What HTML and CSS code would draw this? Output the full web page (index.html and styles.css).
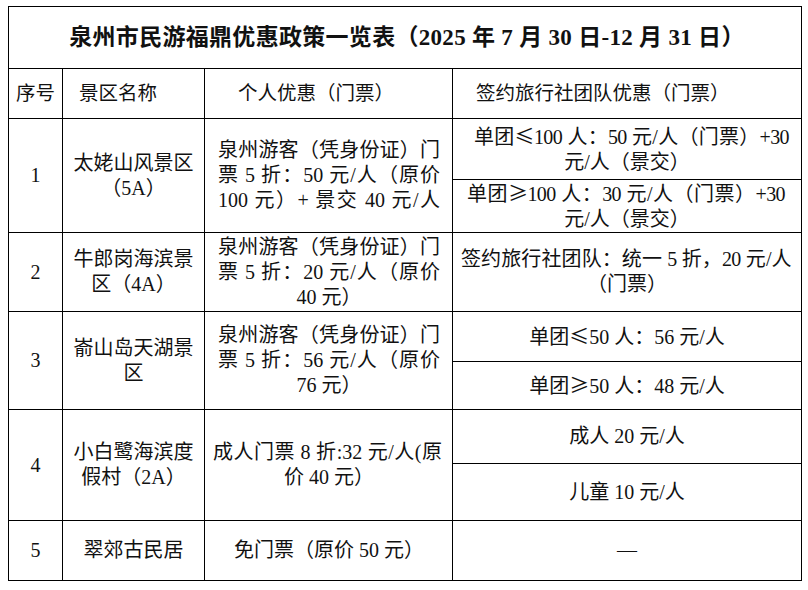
FILE: index.html
```html
<!DOCTYPE html>
<html lang="zh-CN">
<head>
<meta charset="utf-8">
<title>泉州市民游福鼎优惠政策一览表</title>
<link rel="stylesheet" href="styles.css">
</head>
<body>
<div class="sheet">
  <div class="cell title">泉州市民游福鼎优惠政策一览表（2025 年 7 月 30 日-12 月 31 日）</div>

  <div class="cell head h1">序号</div>
  <div class="cell head h2">景区名称</div>
  <div class="cell head h3">个人优惠（门票）</div>
  <div class="cell head h4">签约旅行社团队优惠（门票）</div>

  <div class="cell num span2">1</div>
  <div class="cell name span2"><div>太姥山风景区</div><div>（5A）</div></div>
  <div class="cell pers span2">
    <div class="jl">泉州游客（凭身份证）门</div>
    <div class="jl">票 5 折：50 元/人（原价</div>
    <div class="jl">100 元）+ 景交 40 元/人</div>
  </div>
  <div class="cell grp">
    <div class="jl tight g1">单团<span class="sym">≤</span>100 人：50 元/人（门票）+30</div>
    <div>元/人（景交）</div>
  </div>
  <div class="cell grp">
    <div class="jl tight g2">单团<span class="sym">≥</span>100 人：30 元/人（门票）+30</div>
    <div>元/人（景交）</div>
  </div>

  <div class="cell num">2</div>
  <div class="cell name"><div>牛郎岗海滨景</div><div>区（4A）</div></div>
  <div class="cell pers">
    <div class="jl">泉州游客（凭身份证）门</div>
    <div class="jl">票 5 折：20 元/人（原价</div>
    <div>40 元）</div>
  </div>
  <div class="cell grp">
    <div class="jl tight g3">签约旅行社团队：统一 5 折，20 元/人</div>
    <div>（门票）</div>
  </div>

  <div class="cell num span2">3</div>
  <div class="cell name span2"><div>嵛山岛天湖景</div><div>区</div></div>
  <div class="cell pers span2">
    <div class="jl">泉州游客（凭身份证）门</div>
    <div class="jl">票 5 折：56 元/人（原价</div>
    <div>76 元）</div>
  </div>
  <div class="cell grp"><div>单团<span class="sym">≤</span>50 人：56 元/人</div></div>
  <div class="cell grp"><div>单团<span class="sym">≥</span>50 人：48 元/人</div></div>

  <div class="cell num span2">4</div>
  <div class="cell name span2"><div>小白鹭海滨度</div><div>假村（2A）</div></div>
  <div class="cell pers span2">
    <div class="jl wide">成人门票 8 折:32 元/人(原</div>
    <div>价 40 元）</div>
  </div>
  <div class="cell grp"><div>成人 20 元/人</div></div>
  <div class="cell grp"><div>儿童 10 元/人</div></div>

  <div class="cell num">5</div>
  <div class="cell name"><div>翠郊古民居</div></div>
  <div class="cell pers"><div>免门票（原价 50 元）</div></div>
  <div class="cell grp"><div>—</div></div>
</div>
</body>
</html>
```
FILE: styles.css
```css
html, body {
  background: #ffffff;
}
body {
  margin: 6px 0 0 8px;
  font-family: "Liberation Serif", "Noto Sans CJK SC", serif;
  font-size: 20px;
  color: #111111;
}
.sheet {
  display: grid;
  grid-template-columns: 53px 141px 247px 348px;
  grid-template-rows: 61px 49px 60px 52px 78px 49px 47px 53px 56px 59px;
  gap: 1px;
  padding: 1px;
  background: #000000;
  width: max-content;
}
.cell {
  background: #ffffff;
  display: flex;
  flex-direction: column;
  justify-content: center;
  text-align: center;
  line-height: 25px;
  min-width: 0;
}
.span2 {
  grid-row: span 2;
}
.title {
  grid-column: 1 / -1;
  font-size: 23px;
  font-weight: bold;
  letter-spacing: 0.3px;
  padding-left: 4px;
}
.head {
  font-size: 19.5px;
  text-align: left;
}
.h1 {
  text-align: center;
}
.h2 {
  padding-left: 16px;
}
.h3 {
  padding-left: 33px;
}
.h4 {
  padding-left: 23px;
}
.pers {
  padding: 0 12px 0 13px;
}
.jl {
  text-align: justify;
  text-align-last: justify;
}
.tight {
  letter-spacing: -0.6px;
}
.wide {
  margin: 0 -2px 0 -5px;
}
.grp {
  align-items: stretch;
}
.g1 {
  margin-left: 21px;
  width: 315px;
}
.g2 {
  margin-left: 14px;
  width: 318px;
}
.g3 {
  margin-left: 8px;
  width: 330px;
}
.sym {
  font-family: "Noto Sans CJK SC", sans-serif;
}
```
